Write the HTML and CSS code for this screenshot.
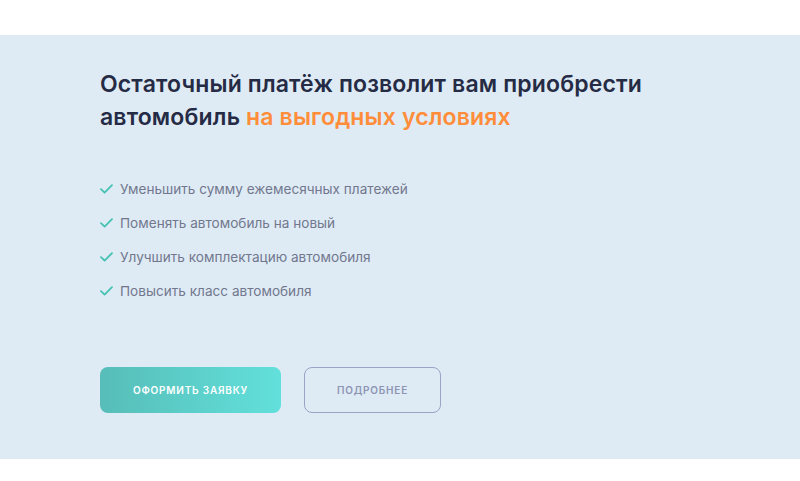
FILE: index.html
```html
<html lang="ru">
<head>
    <meta charset="UTF-8">
    <meta name="viewport" content="width=device-width, initial-scale=1.0">
    <title>Остаточный платёж</title>
    <link rel="stylesheet" href="styles.css">
</head>
<body>
    <div class="top-space"></div>
    <section class="offer">
        <h2 class="offer-title">Остаточный платёж позволит вам приобрести автомобиль <span class="accent">на выгодных условиях</span></h2>

        <ul class="benefits">
            <li class="benefit">
                <svg class="check" width="13" height="10" viewBox="0 0 13 10"><path d="M1 5.2 L4.6 8.6 L12 1.2" fill="none" stroke="#45c1b3" stroke-width="1.8" stroke-linecap="round" stroke-linejoin="round"/></svg>
                <span>Уменьшить сумму ежемесячных платежей</span>
            </li>
            <li class="benefit">
                <svg class="check" width="13" height="10" viewBox="0 0 13 10"><path d="M1 5.2 L4.6 8.6 L12 1.2" fill="none" stroke="#45c1b3" stroke-width="1.8" stroke-linecap="round" stroke-linejoin="round"/></svg>
                <span>Поменять автомобиль на новый</span>
            </li>
            <li class="benefit">
                <svg class="check" width="13" height="10" viewBox="0 0 13 10"><path d="M1 5.2 L4.6 8.6 L12 1.2" fill="none" stroke="#45c1b3" stroke-width="1.8" stroke-linecap="round" stroke-linejoin="round"/></svg>
                <span>Улучшить комплектацию автомобиля</span>
            </li>
            <li class="benefit">
                <svg class="check" width="13" height="10" viewBox="0 0 13 10"><path d="M1 5.2 L4.6 8.6 L12 1.2" fill="none" stroke="#45c1b3" stroke-width="1.8" stroke-linecap="round" stroke-linejoin="round"/></svg>
                <span>Повысить класс автомобиля</span>
            </li>
        </ul>

        <div class="actions">
            <button class="btn btn-primary">Оформить заявку</button>
            <button class="btn btn-outline">Подробнее</button>
        </div>
    </section>
</body>
</html>
```

FILE: styles.css
```css
body{
    margin: 0;
    padding: 0;
    background-color: #ffffff;
    font-family: Inter, "Noto Sans", sans-serif;
}

.top-space{
    height: 35px;
}

.offer{
    background-color: #deebf5;
    height: 424px;
    box-sizing: border-box;
    padding: 33px 100px 0 100px;
}

.offer-title{
    margin: 0;
    width: 580px;
    font-size: 23px;
    line-height: 33px;
    font-weight: 600;
    color: #262b45;
    letter-spacing: 0.15px;
}
.accent{
    color: #ff8d3a;
}

.benefits{
    list-style: none;
    margin: 45px 0 0 0;
    padding: 0;
    display: flex;
    flex-direction: column;
    gap: 14px;
}
.benefit{
    display: flex;
    align-items: center;
    gap: 7px;
    height: 20px;
    font-size: 13.6px;
    color: #72778d;
}

.actions{
    display: flex;
    gap: 23px;
    margin-top: 66px;
}
.btn{
    height: 46px;
    border-radius: 8px;
    font-family: Inter, "Noto Sans", sans-serif;
    font-size: 10px;
    font-weight: 600;
    letter-spacing: 0.8px;
    text-transform: uppercase;
    cursor: pointer;
}
.btn-primary{
    width: 181px;
    border: none;
    color: #ffffff;
    background-image: linear-gradient(to right, #57bdb8 0%, #62e0db 100%);
}
.btn-outline{
    width: 137px;
    border: 1px solid #9aa4c4;
    color: #8d95b3;
    background-color: transparent;
}
```
